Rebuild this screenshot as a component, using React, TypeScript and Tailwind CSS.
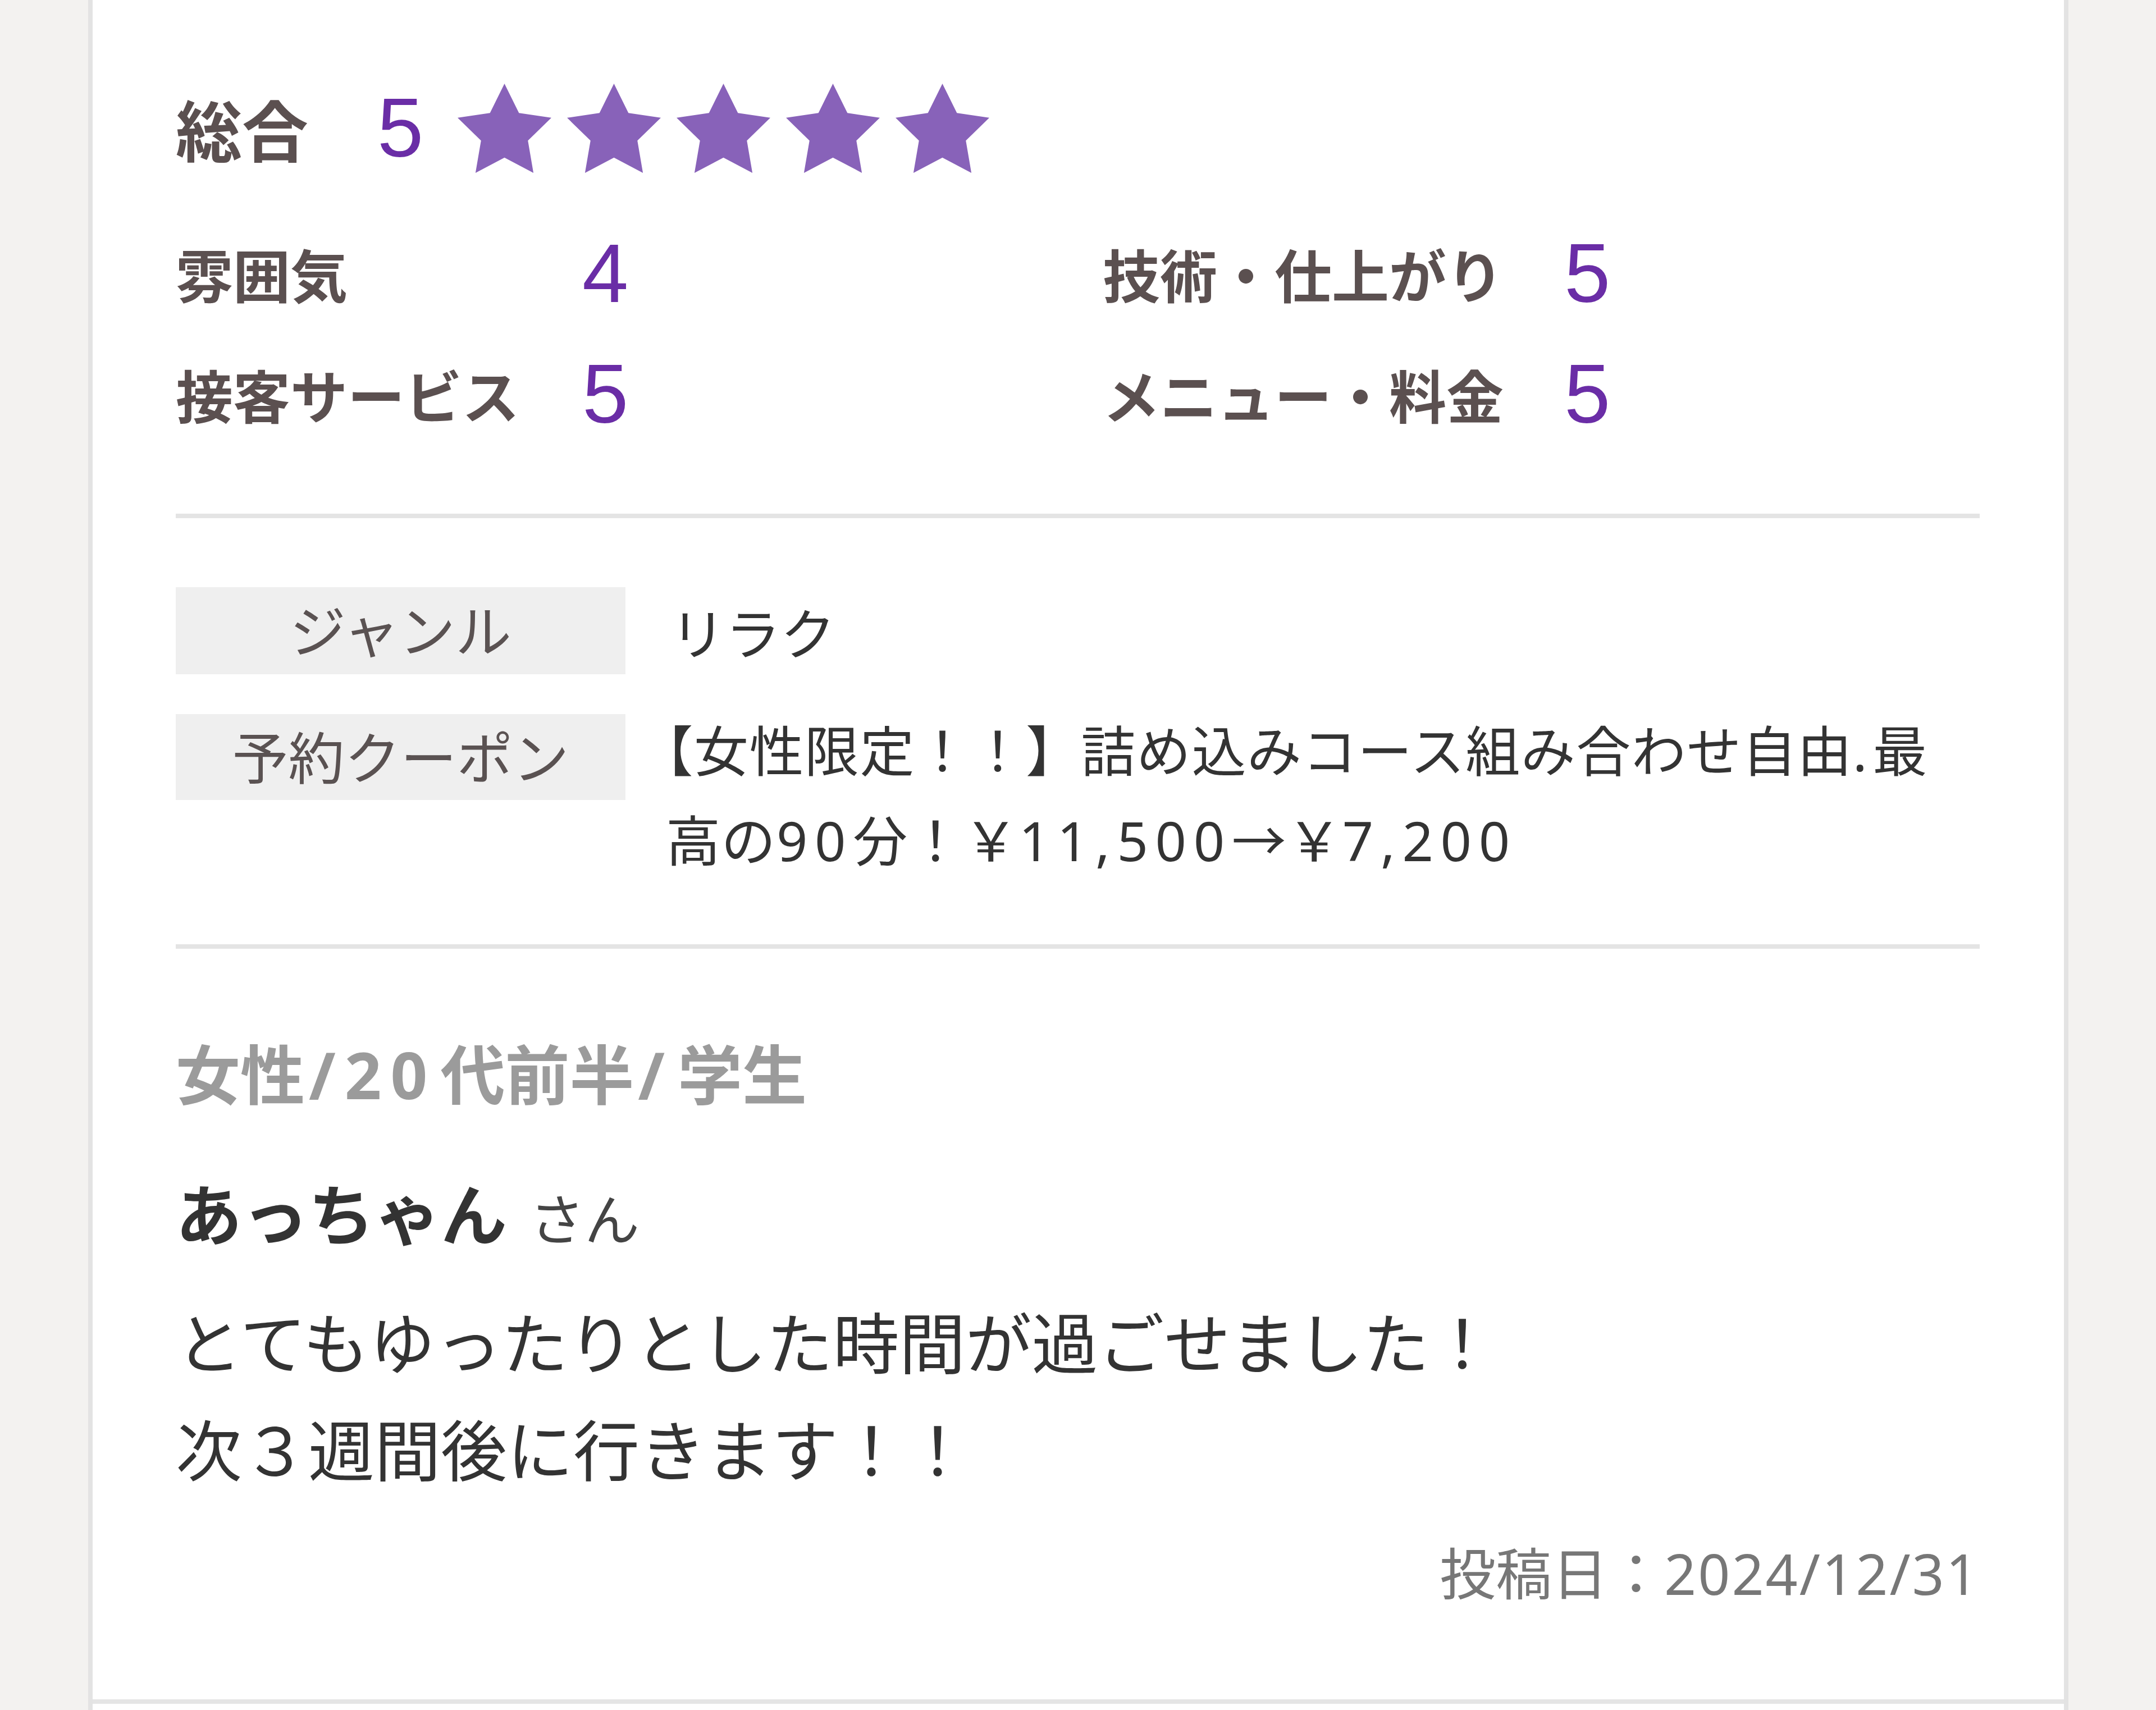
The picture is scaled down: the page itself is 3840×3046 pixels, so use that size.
import React from "react";

const JP = { fontFamily: '"Noto Sans CJK JP", "Noto Sans", sans-serif' };

function Star() {
  return (
    <svg width="167" height="159" viewBox="2 2 20 19.02" className="block shrink-0">
      <path
        d="M12 2l3.09 6.26L22 9.27l-5 4.87 1.18 6.88L12 17.77l-6.18 3.25L7 14.14 2 9.27l6.91-1.01L12 2z"
        fill="#8862b9"
      />
    </svg>
  );
}

function Num({ v }: { v: string }) {
  return (
    <span className="font-['Liberation_Sans',Arial,sans-serif] text-[148px] leading-none text-[#6a2da6]">
      {v}
    </span>
  );
}

function Lat({ children, cls }: { children: React.ReactNode; cls: string }) {
  return <span className={`font-['Noto_Sans','Noto_Sans_CJK_JP',sans-serif] ${cls}`}>{children}</span>;
}

function RatingCell({ label, value, labelW }: { label: string; value: string; labelW: string }) {
  return (
    <div className="flex items-center">
      <div className={`${labelW} text-[102px] font-bold leading-[130px] text-[#5b5050]`}>{label}</div>
      <Num v={value} />
    </div>
  );
}

export default function App() {
  return (
    <div className="min-h-[3046px] w-full bg-[#f3f2f0] pl-[157px] pr-[156px]" style={JP}>
      <div className="border-x-[8px] border-[#e3e3e3] bg-white pb-[11px]">
        <div className="border-b-[8px] border-[#e5e5e5] pl-[148px] pr-[150px] pt-[147px] pb-[150px]">
          {/* overall */}
          <div className="flex h-[162px] items-center">
            <div className="w-[359px] text-[118px] font-bold leading-[140px] text-[#5b5050]">総合</div>
            <Num v="5" />
            <div className="ml-[61px] flex gap-[28px]">
              <Star />
              <Star />
              <Star />
              <Star />
              <Star />
            </div>
          </div>
          {/* sub ratings */}
          <div className="mt-[70px] flex h-[215px] items-center">
            <div className="w-[1651px]">
              <RatingCell label="雰囲気" value="4" labelW="w-[724px]" />
            </div>
            <RatingCell label="技術・仕上がり" value="5" labelW="w-[822px]" />
          </div>
          <div className="flex h-[215px] items-center">
            <div className="w-[1651px]">
              <RatingCell label="接客サービス" value="5" labelW="w-[724px]" />
            </div>
            <RatingCell label="メニュー・料金" value="5" labelW="w-[822px]" />
          </div>
          <div className="mt-[106px] h-[8px] bg-[#e4e4e4]" />

          {/* table */}
          <div className="mt-[122px] flex items-center">
            <div className="flex h-[155px] w-[801px] shrink-0 items-center justify-center bg-[#efefef] pb-[8px] text-[100px] leading-none text-[#5a5252]">
              ジャンル
            </div>
            <div className="ml-[80px] text-[98px] leading-[156px] text-[#333333]">リラク</div>
          </div>
          <div className="mt-[71px] flex items-start">
            <div className="flex h-[153px] w-[801px] shrink-0 items-center justify-center bg-[#efefef] pb-[8px] text-[100px] leading-none text-[#5a5252]">
              予約クーポン
            </div>
            <div className="-mt-[18px] ml-[72px] text-[97px] leading-[156px] tracking-[1.5px] text-[#333333] [text-spacing-trim:trim-start]">
              【女性限定！！】詰め込みコース組み合わせ自由<Lat cls="tracking-[0.1em]">.</Lat>最
              <br />
              高の<Lat cls="tracking-[0.13em]">90</Lat>分！￥<Lat cls="tracking-[0.13em]">11,500</Lat>→￥
              <Lat cls="tracking-[0.13em]">7,200</Lat>
            </div>
          </div>
          <div className="mt-[108px] h-[8px] bg-[#e4e4e4]" />

          {/* reviewer */}
          <div className="mt-[133px] text-[115px] font-bold leading-[170px] text-[#9b9b9b]">
            女性<Lat cls="px-[0.06em] tracking-[0.14em]">/20</Lat>代前半<Lat cls="px-[0.06em] tracking-[0.14em]">/</Lat>学生
          </div>
          <div className="mt-[74px] flex items-baseline leading-[170px] text-[#333333]">
            <span className="text-[118px] font-bold">あっちゃん</span>
            <span className="ml-[40px] text-[98px] text-[#444444]">さん</span>
          </div>
          <div className="mt-[40px] text-[118px] leading-[191px] text-[#333333]">
            とてもゆったりとした時間が過ごせました！
            <br />
            次３週間後に行きます！！
          </div>
          <div className="mt-[50px] text-right text-[100px] leading-[150px] text-[#777777]">
            投稿日：<Lat cls="tracking-[0.03em]">2024/12/31</Lat>
          </div>
        </div>
      </div>
    </div>
  );
}
